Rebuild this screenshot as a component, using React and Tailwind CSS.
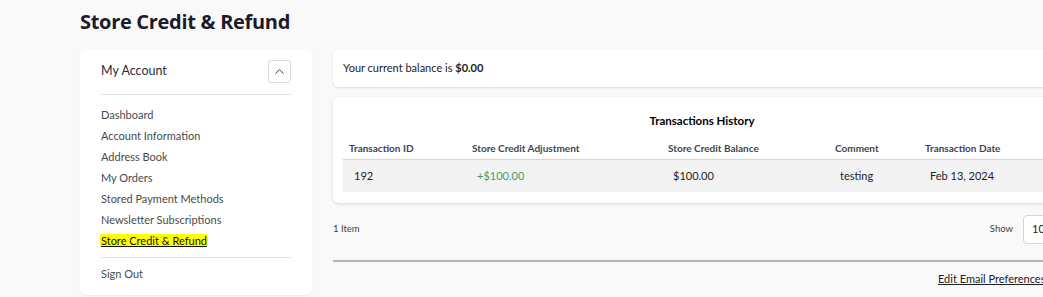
import { ChevronUp } from "lucide-react";

const links = [
  "Dashboard",
  "Account Information",
  "Address Book",
  "My Orders",
  "Stored Payment Methods",
  "Newsletter Subscriptions",
];

const cols = [
  { label: "Transaction ID", w: "w-[123px]" },
  { label: "Store Credit Adjustment", w: "w-[196px]" },
  { label: "Store Credit Balance", w: "w-[167px]" },
  { label: "Comment", w: "w-[90px]" },
  { label: "Transaction Date", w: "w-[142px]" },
];

const Sidebar = () => {
  return (
    <aside className="w-[232px] shrink-0 bg-white rounded-md shadow-[0_1px_2px_rgba(0,0,0,0.06)] px-[21px] pt-[11px] pb-[11px]">
      <div className="flex items-center justify-between pb-[11px] border-b border-[#e2e2e2]">
        <span className="text-[12.5px] text-[#2b2b3a]">My Account</span>
        <button className="size-[23px] flex items-center justify-center border border-[#dcdcdc] rounded-[3px] text-[#333]">
          <ChevronUp className="size-[15px]" strokeWidth={1.5} />
        </button>
      </div>

      <ul className="pt-[9px] pb-[6px] border-b border-[#e2e2e2]">
        {links.map((l) => (
          <li key={l} className="text-[11px] leading-[21px] text-[#4a4a4a]">
            {l}
          </li>
        ))}
        <li className="text-[11px] leading-[21px] text-[#111]">
          <span className="bg-[#ffff00] underline px-[1px] -ml-[1px] rounded-[2px]">
            Store Credit &amp; Refund
          </span>
        </li>
      </ul>

      <div className="pt-[5px] text-[11px] leading-[21px] text-[#4a4a4a]">Sign Out</div>
    </aside>
  );
};

const App = () => {
  return (
    <div
      className="w-[1043px] h-[297px] overflow-hidden bg-[#f9f9f9] pl-[80px] pt-[8px]"
      style={{ fontFamily: "Lato, 'Open Sans', sans-serif" }}
    >
      <h1
        className="text-[20px] leading-[28px] font-bold text-[#1b1b2b] tracking-[-0.3px]"
        style={{ fontFamily: "'Open Sans', sans-serif" }}
      >
        Store Credit &amp; Refund
      </h1>

      <div className="flex mt-[13px]">
        <Sidebar />

        <main className="ml-[21px] w-[738px] shrink-0">
          <div className="bg-white rounded-md shadow-[0_1px_2px_rgba(0,0,0,0.12)] h-[38px] px-[10px] flex items-center text-[11px] text-[#222]">
            Your current balance is&nbsp;<b>$0.00</b>
          </div>

          <div className="mt-[10px] bg-white rounded-md shadow-[0_1px_3px_rgba(0,0,0,0.15)] px-[10px] pt-[16px] pb-[11px]">
            <div className="text-center text-[11.5px] leading-[16px] font-bold text-black">
              Transactions History
            </div>

            <div className="mt-[8px] flex border-b border-[#d4d4dc]">
              {cols.map((c) => (
                <div
                  key={c.label}
                  className={`${c.w} h-[22px] pl-[6px] text-[10px] font-bold text-[#3c4656] flex items-center`}
                >
                  {c.label}
                </div>
              ))}
            </div>

            <div className="flex bg-[#f3f3f3] h-[32px] items-center text-[11px] text-[#222]">
              <div className="w-[123px] pl-[11px]">192</div>
              <div className="w-[196px] pl-[11px] text-[#4a9a66]">+$100.00</div>
              <div className="w-[167px] pl-[11px]">$100.00</div>
              <div className="w-[90px] pl-[11px]">testing</div>
              <div className="w-[142px] pl-[11px]">Feb 13, 2024</div>
            </div>
          </div>

          <div className="mt-[12px] flex items-center justify-between h-[29px]">
            <span className="text-[9.5px] text-[#444]">1 Item</span>
            <div className="flex items-center gap-[10px] mr-[2px]">
              <span className="text-[9.5px] text-[#444]">Show</span>
              <div className="h-[29px] w-[46px] bg-white border border-[#d6d6d6] rounded-[4px] flex items-center px-[8px] text-[11px] text-[#222]">
                10
              </div>
            </div>
          </div>

          <div className="mt-[16px] border-t-2 border-[#b5b5b5]" />

          <div className="mt-[9px] pl-[605px] text-[11px] text-[#222] underline">
            Edit Email Preferences
          </div>
        </main>
      </div>
    </div>
  );
};

export default App;
